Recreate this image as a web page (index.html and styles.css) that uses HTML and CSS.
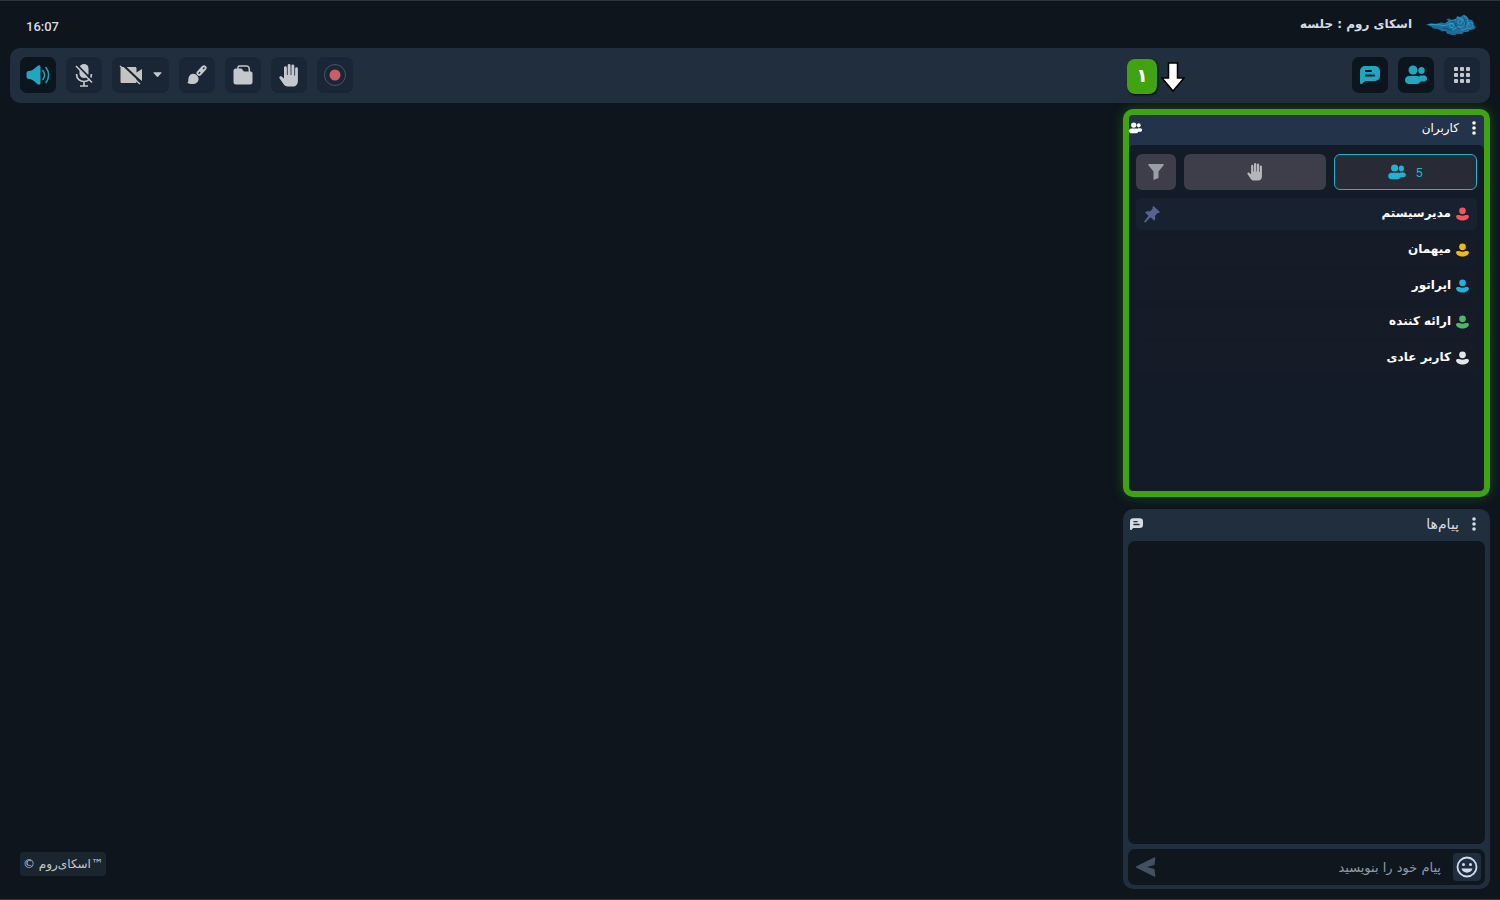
FILE: index.html
```html
<!DOCTYPE html>
<html lang="fa" dir="rtl">
    <head>
        <title>اسکای روم : جلسه</title>
        <meta charset="utf-8" />
        <link rel="stylesheet" href="styles.css">
    </head>

    <body>
        <!-- Shared icons -->
        <svg class="sprite" aria-hidden="true">
            <symbol id="icon-users" viewBox="0 0 22 20">
                <circle cx="8" cy="5" r="4.500" />
                <ellipse cx="16.500" cy="5.500" rx="3.200" ry="3.500" />
                <path d="M4 11h8.500c2.500 0 3.500 2 3.500 3.700 0 2.800-2.500 4.300-4.500 4.300H4c-2.600 0-4-2-4-4s1.500-4 4-4z" />
                <path d="M14.500 10.500H19c2 0 3 1.400 3 3s-1 3-3 3h-4z" />
            </symbol>
            <symbol id="icon-user" viewBox="0 0 14 14">
                <circle cx="7" cy="3.600" r="3.600" />
                <path d="M2.500 8.200h1c2.300.8 4.700.8 7 0h1c3 0 3 2 1.300 3.800-3 2.600-8.600 2.600-11.600 0C-.5 10.200-.5 8.200 2.500 8.200z" />
            </symbol>
            <symbol id="icon-chat" viewBox="0 0 20 19">
                <path fill-rule="evenodd" d="M5 0h10a5 5 0 0 1 5 5v5a5 5 0 0 1-5 5H6.500C4.500 15 3.500 16 3 17c-.8 1.600-3 1.400-3-.5V5a5 5 0 0 1 5-5zM6 4a1 1 0 0 0 0 2h5a1 1 0 0 0 0-2zM6 8.500a1 1 0 0 0 0 2h8a1 1 0 0 0 0-2z" />
            </symbol>
            <symbol id="icon-hand" viewBox="0 0 20 23">
                <path d="M5 13.500V3.700a1.450 1.450 0 0 1 2.900 0V11h.8V1.500a1.450 1.450 0 0 1 2.900 0V11h.8V2a1.450 1.450 0 0 1 2.900 0v9.500h.8V4.700a1.400 1.400 0 0 1 2.800 0V17c0 3.500-2 5.500-5 5.500H9c-2.500 0-3.500-1-4.700-2.700L.5 14.300c-.8-1.300.8-2.700 2.200-1.700L5 14.500z" />
            </symbol>
            <symbol id="icon-dots" viewBox="0 0 4 14">
                <circle cx="2" cy="2" r="1.800" />
                <circle cx="2" cy="7" r="1.800" />
                <circle cx="2" cy="12" r="1.800" />
            </symbol>
        </svg>

        <header class="topbar">
            <div class="brand">
                <svg class="logo" viewBox="0 0 50 21">
                    <path fill="#1b6f9c" d="M0 10.500l5-1.200 5 .4 5-1.200 5 .8 3-2.300-3-1.500 3-1 3 1.500 4-1.500 1-2.500 3 1 4-2.500 3 2 2 3 3 .5 2 3-1 2 3 2-2 2.500-4 .5-2 2-4 0-2 2-5-.3-3 2-4-1.500-3-.5-1-2.500-4 0-4-2.200-5-.5-1-1.500z" />
                    <g fill="none" stroke="#3ba5cc" stroke-width=".8">
                        <path d="M3 10.500c6 0 10 0 14 1 4 1 6-3 9-2s2 5-1 4-1-4 2-4M20 9c3-2 7-3 10-3M31 4c3-1 6 1 5 4s-5 2-4-1 4-3 6 0-1 7-4 6-5 2-8 3M38 2c3 1 5 4 3 6M41 10c3-3 7-1 6 2s-6 3-6 0 3-3 3 0M35 16c3 0 5-1 7-2" />
                    </g>
                    <path fill="none" stroke="#0d3e65" stroke-width=".7" d="M17 14c4-1 5 3 9 2M30 9c-1 3 1 5 3 6M39 5c-2 3 2 3 0 6M24 7c2 1 3 0 5 0" />
                </svg>
                <h1 class="title">اسکای روم : جلسه</h1>
            </div>
            <time class="clock" dir="ltr">16:07</time>
        </header>

        <nav class="toolbar">
            <div class="tools">
                <button class="tool" aria-label="چیدمان">
                    <svg width="18" height="18" viewBox="0 0 18 18" fill="#cfd6e2">
                        <rect x="1" y="1" width="4" height="4" rx="1" /><rect x="7" y="1" width="4" height="4" rx="1" /><rect x="13" y="1" width="4" height="4" rx="1" />
                        <rect x="1" y="7" width="4" height="4" rx="1" /><rect x="7" y="7" width="4" height="4" rx="1" /><rect x="13" y="7" width="4" height="4" rx="1" />
                        <rect x="1" y="13" width="4" height="4" rx="1" /><rect x="7" y="13" width="4" height="4" rx="1" /><rect x="13" y="13" width="4" height="4" rx="1" />
                    </svg>
                </button>
                <button class="tool active" aria-label="کاربران"><svg width="22" height="20"><use href="#icon-users" /></svg></button>
                <button class="tool active" aria-label="پیام‌ها"><svg width="20" height="19"><use href="#icon-chat" /></svg></button>
            </div>
            <div class="tools">
                <button class="tool" aria-label="ضبط">
                    <svg width="24" height="24" viewBox="0 0 24 24">
                        <circle cx="12" cy="12" r="10.500" fill="none" stroke="#46556a" />
                        <circle cx="12" cy="12" r="5.500" fill="#c95f63" />
                    </svg>
                </button>
                <button class="tool" aria-label="اجازه"><svg width="20" height="23"><use href="#icon-hand" /></svg></button>
                <button class="tool" aria-label="فایل‌ها">
                    <svg width="20" height="20" viewBox="0 0 20 20">
                        <path fill="none" stroke="#c4c7cb" stroke-width="1.500" d="M5 4V2.500C5 1.500 5.500 1 6.500 1h7c1.500 0 2 .5 2.500 1.500L16.500 7" />
                        <path d="M3 3.500h5c2 0 1.500 3 3.500 3h6c1.500 0 2 .8 2 2V17c0 1.500-.8 2.500-2.500 2.500H3c-1.500 0-2.500-.8-2.500-2.500V6c0-1.500.8-2.500 2.500-2.500z" />
                    </svg>
                </button>
                <button class="tool" aria-label="تخته">
                    <svg width="20" height="20" viewBox="0 0 20 20">
                        <path d="M0 17.500c2 0 1-2.500 1.500-4.500.8-4 5-5.500 8-3 3.300 2.700 2.500 7-1 8.500-2.800 1.200-6 .5-8.500-1z" />
                        <path fill="none" stroke="#c4c7cb" stroke-width="1.900" d="M10.500 7.500l5.200-5.700c1.700-1.500 4 .5 2.500 2.300L13 9.700c-1.200.8-3.200-1-2.500-2.200zM13 7l3-3.300" />
                    </svg>
                </button>
                <button class="tool wide" aria-label="دوربین">
                    <svg width="9" height="6" viewBox="0 0 10 6"><path d="M1 0h8q1 0 .4.800L5.600 5q-.6.600-1.200 0L.6.800Q0 0 1 0z" /></svg>
                    <svg width="24" height="20" viewBox="0 0 24 20">
                        <path fill="#c4c3c0" d="M3 2h13c1 0 1.500.6 1.500 1.500v4L23 4v12l-5.500-3.500v4c0 1-.5 1.500-1.500 1.500H3c-1 0-1.500-.5-1.500-1.500v-13C1.500 2.600 2 2 3 2z" />
                        <path fill="none" stroke="#172233" stroke-width="2" d="M3-1l21 20" />
                        <path fill="none" stroke="#c4c7cb" stroke-width="1.500" d="M1 1l20 18" />
                    </svg>
                </button>
                <button class="tool" aria-label="میکروفون">
                    <svg width="18" height="23" viewBox="0 0 18 23">
                        <rect x="4.500" y="0" width="9" height="14" rx="4.500" />
                        <path fill="none" stroke="#c4c7cb" stroke-width="1.700" d="M1.500 10c0 10 15 10 15 0M9 17.500v4M5 22h8" />
                        <path fill="none" stroke="#172233" stroke-width="1.800" d="M2 1l16 16" />
                        <path fill="none" stroke="#c4c7cb" stroke-width="1.600" d="M1 2l16 16.500" />
                    </svg>
                </button>
                <button class="tool active" aria-label="صدا">
                    <svg width="24" height="20" viewBox="0 0 24 20">
                        <path d="M3 6c2 0 3-.5 4.500-1.700l4-3.300c1.500-1.200 3-.7 3 1v16c0 1.700-1.500 2.200-3 1l-4-3.300C6 14.500 5 14 3 14c-1.700 0-2.500-.8-2.500-2.500v-3C.5 6.800 1.300 6 3 6z" />
                        <path fill="none" stroke="#1fa7bf" stroke-width="1.500" stroke-linecap="round" d="M17 5.500c2 3 2 6 0 9M20 2.500c3.500 5 3.500 10 0 15" />
                    </svg>
                </button>
            </div>
        </nav>

        <div class="content">
            <aside class="sidebar">
                <section class="panel users">
                    <div class="marker">
                        <span class="step">۱</span>
                        <svg width="24" height="32" viewBox="0 0 24 32">
                            <path fill="#fff" stroke="#000" stroke-width="1.500" d="M7.500 2h9v15H23L12 30 1 17h6.500z" />
                        </svg>
                    </div>
                    <div class="panel-head">
                        <button class="more" aria-label="گزینه‌ها"><svg width="4" height="14"><use href="#icon-dots" /></svg></button>
                        <h2 class="panel-title">کاربران</h2>
                        <svg width="13" height="12"><use href="#icon-users" /></svg>
                    </div>
                    <div class="panel-body">
                        <div class="tabs">
                            <button class="tab selected"><span>5</span><svg width="18" height="16"><use href="#icon-users" /></svg></button>
                            <button class="tab" aria-label="دست بالا"><svg width="16" height="18"><use href="#icon-hand" /></svg></button>
                            <button class="tab filter" aria-label="فیلتر">
                                <svg width="16" height="16" viewBox="0 0 16 16"><path d="M1 0h14q1.500 0 .6 1.200L10.500 7.500V14L5.500 16V7.500L.4 1.200Q-.5 0 1 0z" /></svg>
                            </button>
                        </div>
                        <ul class="user-list">
                            <li class="user pinned">
                                <svg class="red" width="13" height="14"><use href="#icon-user" /></svg>
                                <span class="name">مدیرسیستم</span>
                                <svg class="pin" width="16" height="17" viewBox="0 0 16 17"><path d="M9.500 0L16 6l-1.500 1.300-1-.2-2.500 3c.6 2 .2 3.500-.8 4.700L6.500 11.300 1.200 16.700 0 15.700l4.500-5.900L1 6.500c1.200-1.200 3-1.500 5-1.100L8.700 2.500 8.500 1z" /></svg>
                            </li>
                            <li class="user">
                                <svg class="yellow" width="13" height="14"><use href="#icon-user" /></svg>
                                <span class="name">میهمان</span>
                            </li>
                            <li class="user">
                                <svg class="blue" width="13" height="14"><use href="#icon-user" /></svg>
                                <span class="name">اپراتور</span>
                            </li>
                            <li class="user">
                                <svg class="green" width="13" height="14"><use href="#icon-user" /></svg>
                                <span class="name">ارائه کننده</span>
                            </li>
                            <li class="user">
                                <svg class="white" width="13" height="14"><use href="#icon-user" /></svg>
                                <span class="name">کاربر عادی</span>
                            </li>
                        </ul>
                    </div>
                </section>

                <section class="panel messages">
                    <div class="panel-head">
                        <button class="more" aria-label="گزینه‌ها"><svg width="4" height="14"><use href="#icon-dots" /></svg></button>
                        <h2 class="panel-title">پیام‌ها</h2>
                        <svg width="13" height="13"><use href="#icon-chat" /></svg>
                    </div>
                    <div class="message-list"></div>
                    <form class="composer">
                        <button class="emoji" type="button" aria-label="شکلک">
                            <svg width="22" height="22" viewBox="0 0 22 22">
                                <circle cx="11" cy="11" r="9.500" fill="none" stroke="#d5dce6" stroke-width="1.800" />
                                <circle cx="7.500" cy="8.500" r="1.500" /><circle cx="14.500" cy="8.500" r="1.500" />
                                <path d="M5.500 12.500h11c-.8 5.500-10.200 5.500-11 0z" />
                            </svg>
                        </button>
                        <input class="message" type="text" placeholder="پیام خود را بنویسید" aria-label="پیام خود را بنویسید" />
                        <button class="send" type="button" aria-label="ارسال">
                            <svg width="20" height="20" viewBox="0 0 20 20"><path d="M.5 9.200L18 .4q1.500-.6 1.300.8L18.500 8 11 10l7.500 2 .8 6.800q.2 1.400-1.300.8L.5 10.800q-1-.8 0-1.600z" /></svg>
                        </button>
                    </form>
                </section>
            </aside>
            <a class="credit" href="#">™اسکای‌روم ©</a>
        </div>
    </body>
</html>
```

FILE: styles.css
```css
* {
    box-sizing: border-box;
}

body {
    margin: 0;
    min-height: 100vh;
    display: flex;
    flex-direction: column;
    padding: 0 10px;
    background-color: #0e151d;
    border-top: 1px solid #30373f;
    border-bottom: 1px solid #30373f;
    font-family: "DejaVu Sans", sans-serif;
    font-size: 13px;
    color: #d5dce6;
}

button, input {
    font: inherit;
    color: inherit;
    border: 0;
    padding: 0;
    background: none;
}

button {
    cursor: pointer;
}

svg {
    display: block;
    flex: none;
    fill: currentColor;
}

.sprite {
    position: absolute;
    width: 0;
    height: 0;
}

/* Top bar */
.topbar {
    display: flex;
    justify-content: space-between;
    align-items: center;
    height: 47px;
    padding: 0 14px 0 16px;
}

.brand {
    display: flex;
    align-items: center;
    gap: 14px;
}

.logo {
    width: 50px;
    height: 21px;
}

.title {
    margin: 0;
    padding-bottom: 2px;
    font-size: 12px;
    font-weight: bold;
}

.clock {
    padding-top: 3px;
    font-family: Roboto, sans-serif;
    font-size: 13px;
    font-weight: 500;
}

.toolbar {
    display: flex;
    justify-content: space-between;
    padding: 9px 10px 10px;
    background-color: #202e3e;
    border-radius: 10px;
}

.tools {
    display: flex;
    gap: 10px;
}

.tool {
    display: flex;
    align-items: center;
    justify-content: center;
    width: 36px;
    height: 36px;
    border-radius: 7px;
    background-color: #1a2636;
    color: #c4c7cb;
}

.tool.active {
    background-color: #0c141d;
    color: #1fa7bf;
}

.tool.wide {
    width: 57px;
    gap: 10px;
}

.content {
    flex: 1;
    display: flex;
    justify-content: space-between;
    align-items: flex-end;
    padding: 6px 0 10px;
}

.sidebar {
    align-self: stretch;
    display: flex;
    flex-direction: column;
    gap: 12px;
    width: 367px;
}

.credit {
    margin: 0 0 13px 10px;
    padding: 0 3px;
    line-height: 24px;
    font-size: 12px;
    color: #c3cad4;
    background-color: #1a2530;
    border-radius: 4px;
    text-decoration: none;
}

/* Panels */
.panel {
    position: relative;
    display: flex;
    flex-direction: column;
    background-color: #202e3e;
    border-radius: 10px;
}

.panel-head {
    display: flex;
    align-items: center;
    height: 30px;
    padding: 0 8px 4px 0;
}

.panel-title {
    flex: 1;
    margin: 0 13px 0 0;
    font-size: 13px;
    font-weight: normal;
}

.users {
    flex: 376;
    border: 6px solid #41a312;
    background-color: #23344a;
    box-shadow: 0 0 12px #1f4a17;
    color: #fff;
}

.users .panel-title {
    font-size: 12px;
}

.panel-body {
    flex: 1;
    padding: 9px 7px 8px;
    background-color: #141b28;
    border-radius: 5px;
}

.messages {
    flex: 376;
    padding: 0 5px 4px;
}

.messages .panel-head {
    height: 32px;
    padding: 0 9px 2px 2px;
}

.messages .panel-title {
    font-size: 14px;
}

.tabs {
    display: flex;
    gap: 8px;
}

.tab {
    flex: 1;
    display: flex;
    align-items: center;
    justify-content: center;
    gap: 10px;
    height: 36px;
    border-radius: 6px;
    background-color: #3d3e4a;
    color: #b4b6bc;
}

.tab.filter {
    flex: none;
    width: 40px;
    color: #9a9ea6;
}

.tab.selected {
    border: 1px solid #26b0cc;
    background-color: #282a36;
    color: #20b3d0;
}

.tab span {
    font-family: Roboto, sans-serif;
}

.user-list {
    list-style: none;
    margin: 8px 0 0;
    padding: 0;
    display: flex;
    flex-direction: column;
    gap: 4px;
}

.user {
    display: flex;
    align-items: center;
    gap: 5px;
    height: 32px;
    padding: 0 8px;
    border-radius: 5px;
    background-color: #151c27;
}

.user.pinned {
    background-color: #182130;
}

.name {
    flex: 1;
    font-size: 12px;
    font-weight: bold;
    line-height: 24px;
    padding-bottom: 2px;
}

.pin { color: #56638f; }
.red { color: #f0575a; }
.yellow { color: #f0b90f; }
.blue { color: #22b1da; }
.green { color: #4fb76c; }
.white { color: #e3e6eb; }

/* Step marker above the users panel */
.marker {
    position: absolute;
    left: -2px;
    bottom: calc(100% + 21px);
    display: flex;
    flex-direction: row-reverse;
    align-items: center;
    gap: 4px;
}

.step {
    width: 30px;
    height: 35px;
    line-height: 33px;
    text-align: center;
    font-size: 19px;
    font-weight: bold;
    background-color: #41a312;
    border-radius: 8px;
    box-shadow: 1px 1px 2px #000;
}

/* Messages */
.message-list {
    flex: 1;
    background-color: #0f161e;
    border-radius: 7px;
}

.composer {
    display: flex;
    align-items: center;
    height: 36px;
    margin-top: 5px;
    padding: 0 4px 0 8px;
    background-color: #0f161e;
    border-radius: 7px;
}

.emoji {
    display: flex;
    align-items: center;
    justify-content: center;
    width: 28px;
    height: 28px;
    border-radius: 4px;
    background-color: #1e2d40;
}

.message {
    flex: 1;
    min-width: 0;
    height: 28px;
    margin-right: 12px;
    font-size: 13px;
    outline: none;
}

.message::placeholder {
    color: #9299a1;
    opacity: 1;
}

.send {
    color: #42505f;
}
```
